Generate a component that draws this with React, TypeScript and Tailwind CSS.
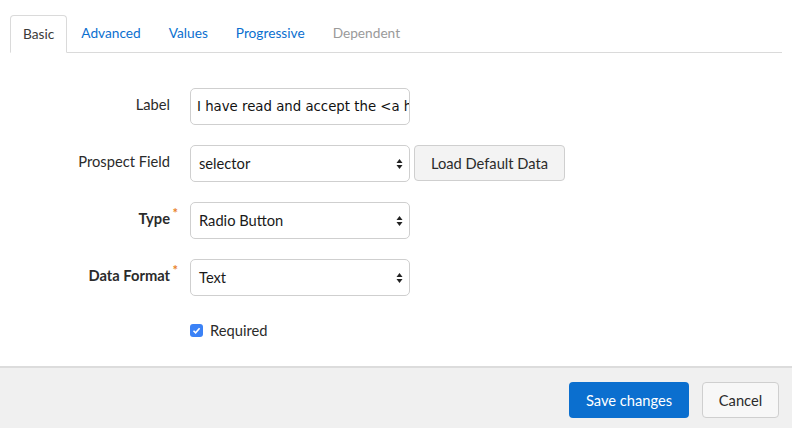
import { ReactNode } from "react";

const tabs = [
  { name: "Basic", active: true },
  { name: "Advanced" },
  { name: "Values" },
  { name: "Progressive" },
  { name: "Dependent", disabled: true },
];

function Arrows() {
  return (
    <svg width="7" height="12" viewBox="0 0 7 12" className="absolute right-[6px] top-1/2 -translate-y-1/2">
      <path d="M3.5 1 L6.5 5 L0.5 5 Z" fill="#222" />
      <path d="M3.5 11 L6.5 7 L0.5 7 Z" fill="#222" />
    </svg>
  );
}

function Row({ label, required, bold, children }: { label: string; required?: boolean; bold?: boolean; children: ReactNode }) {
  return (
    <div className="flex items-start">
      <div className="w-[170px] shrink-0 pt-[6px] text-right text-[14.7px] leading-[20px]">
        <span className={`relative text-[#2b2b2b] ${bold ? "font-bold" : ""}`}>
          {label}
          {required && <span className="absolute -right-[8px] -top-[6px] text-[13px] font-bold text-[#e8822a]">*</span>}
        </span>
      </div>
      <div className="ml-[20px] flex items-start gap-[4px]">{children}</div>
    </div>
  );
}

function Select({ value }: { value: string }) {
  return (
    <div className="relative flex h-[37px] w-[220px] items-center rounded-[5px] border border-[#cfcfcf] bg-white pl-[8px] text-[14.7px] text-[#1a1a1a]">
      {value}
      <Arrows />
    </div>
  );
}

export default function App() {
  return (
    <div className="flex h-[428px] w-[792px] flex-col bg-white font-['Lato',sans-serif]">
      <div className="mx-[10px] mt-[15px] flex border-b border-[#dadada] text-[13.7px]">
        {tabs.map((t) =>
          t.active ? (
            <div key={t.name} className="-mb-px flex h-[38px] items-center rounded-t-[4px] border border-b-white border-[#dadada] bg-white px-[12px] text-[#3a3a3a]">
              {t.name}
            </div>
          ) : (
            <div key={t.name} className={`flex h-[37px] items-center px-[14px] ${t.disabled ? "text-[#9a9a9a]" : "text-[#0b6fcf]"}`}>
              {t.name}
            </div>
          )
        )}
      </div>

      <div className="flex flex-1 flex-col gap-[20px] pt-[35px]">
        <Row label="Label">
          <div className="flex h-[37px] w-[220px] items-center overflow-hidden whitespace-nowrap rounded-[5px] border border-[#cfcfcf] bg-white pl-[6px] font-['DejaVu_Sans',sans-serif] text-[13.3px] text-[#111]">
            I have read and accept the &lt;a href="#"&gt;terms&lt;/a&gt;
          </div>
        </Row>
        <Row label="Prospect Field">
          <Select value="selector" />
          <button className="h-[36px] w-[151px] rounded-[4px] border border-[#cfcfcf] bg-[#f3f3f3] text-[14.7px] text-[#2b2b2b]">
            Load Default Data
          </button>
        </Row>
        <Row label="Type" required bold>
          <Select value="Radio Button" />
        </Row>
        <Row label="Data Format" required bold>
          <Select value="Text" />
        </Row>
        <div className="mt-[3px] ml-[190px] flex items-center gap-[7px]">
          <span className="flex h-[13px] w-[13px] items-center justify-center rounded-[3px] bg-[#3b82f6]">
            <svg width="9" height="9" viewBox="0 0 9 9">
              <path d="M1.5 4.7 L3.6 6.8 L7.6 2.2" stroke="white" strokeWidth="1.6" fill="none" />
            </svg>
          </span>
          <span className="text-[14.7px] text-[#2b2b2b]">Required</span>
        </div>
      </div>

      <div className="flex h-[62px] items-start justify-end gap-[13px] border-t-2 border-[#dcdcdc] bg-[#f0f0f0] pr-[13px] pt-[14px]">
        <button className="h-[36px] w-[120px] rounded-[4px] bg-[#0b6fcf] text-[14.7px] text-white">Save changes</button>
        <button className="h-[36px] w-[77px] rounded-[4px] border border-[#cfcfcf] bg-[#f7f7f7] text-[14.7px] text-[#2b2b2b]">Cancel</button>
      </div>
    </div>
  );
}
